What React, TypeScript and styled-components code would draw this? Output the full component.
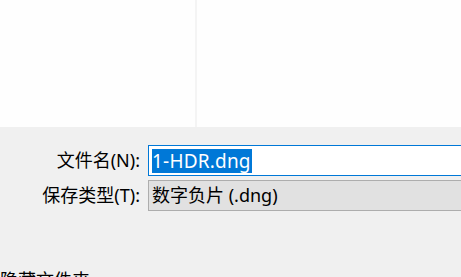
import * as React from 'react'
import styled, { createGlobalStyle } from 'styled-components'

const GlobalStyle = createGlobalStyle`
  html, body {
    margin: 0;
    padding: 0;
    background: #f0f0f0;
    overflow: hidden;
  }
  body {
    font-family: "Noto Sans", "Noto Sans CJK SC", sans-serif;
  }
`

const App: React.FC = () => {
  return (
    <Dialog>
      <GlobalStyle />
      <Browser>
        <NavPane />
        <FileList />
      </Browser>
      <Footer>
        <FieldGrid>
          <Label>文件名(N):</Label>
          <FileNameBox>
            <Selected>1-HDR.dng</Selected>
          </FileNameBox>
          <Label>保存类型(T):</Label>
          <TypeSelect>数字负片 (.dng)</TypeSelect>
        </FieldGrid>
        <HideFolders>隐藏文件夹</HideFolders>
      </Footer>
    </Dialog>
  )
}

export default App

const Dialog = styled.div`
  width: 461px;
  height: 277px;
  display: flex;
  flex-direction: column;
  overflow: hidden;
  color: #000;
`

const Browser = styled.div`
  height: 127px;
  display: flex;
  background: #fefefe;
  flex-shrink: 0;
`

const NavPane = styled.div`
  width: 195px;
  border-right: 2px solid #f4f4f4;
`

const FileList = styled.div`
  flex: 1;
`

const Footer = styled.div`
  flex: 1;
  background: #f0f0f0;
  padding-top: 18px;
  display: flex;
  flex-direction: column;
`

const FieldGrid = styled.div`
  display: grid;
  grid-template-columns: 140px 360px;
  column-gap: 8px;
  row-gap: 4px;
  align-items: center;
`

const Label = styled.div`
  text-align: right;
  font-size: 18px;
  line-height: 31px;
  white-space: nowrap;
`

const FileNameBox = styled.div`
  height: 31px;
  box-sizing: border-box;
  border: 1px solid #0078d7;
  background: #fff;
  padding: 2px 3px;
  font-size: 19px;
  line-height: 25px;
  display: flex;
  align-items: center;
`

const Selected = styled.span`
  background: #0078d7;
  color: #fff;
  line-height: 24px;
  padding-right: 1px;
  letter-spacing: 0.2px;
`

const TypeSelect = styled.div`
  height: 31px;
  box-sizing: border-box;
  border: 1px solid #adadad;
  background: #e1e1e1;
  padding: 0 3px;
  font-size: 18px;
  line-height: 29px;
  white-space: nowrap;
`

const HideFolders = styled.div`
  margin-top: 57px;
  font-size: 18px;
  line-height: 24px;
  white-space: nowrap;
`
